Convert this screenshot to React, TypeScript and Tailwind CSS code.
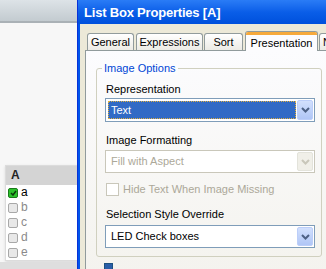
import React from 'react';

const Chevron = ({ color = '#4d6185' }: { color?: string }) => (
  <svg width="9" height="6" viewBox="0 0 9 6">
    <path d="M1 1 L4.5 4.5 L8 1" stroke={color} strokeWidth="2" fill="none" />
  </svg>
);

const Dropdown = ({ value, selected, disabled, tall }: { value: string; selected?: boolean; disabled?: boolean; tall?: boolean }) => (
  <div
    className={`flex w-[210px] items-stretch border p-[1px] ${tall ? 'h-[24px]' : 'h-[23px]'} ${
      disabled ? 'border-[#c9c7ba] bg-white' : 'border-[#7f9db9] bg-white'
    }`}
  >
    <div className="flex flex-1 items-center p-[1px]">
      {selected ? (
        <div className="flex h-full w-full items-center border border-dotted border-[#e0b040] bg-[#316ac5] pl-[2px] text-white">
          {value}
        </div>
      ) : (
        <div className={`pl-[3px] ${disabled ? 'text-[#aca899]' : 'text-black'}`}>{value}</div>
      )}
    </div>
    <div
      className={`flex w-[16px] items-center justify-center rounded-[2px] border ${
        disabled
          ? 'border-[#e3e3db] bg-[#f0efe8]'
          : 'border-[#bccef9] bg-gradient-to-b from-[#d2e0fd] to-[#b0c6f6]'
      }`}
    >
      <Chevron color={disabled ? '#c9c7ba' : '#4d6185'} />
    </div>
  </div>
);

const LedBox = ({ checked }: { checked?: boolean }) =>
  checked ? (
    <div className="flex h-[10px] w-[10px] items-center justify-center rounded-[2px] border border-[#1a7a1a] bg-[#2cc22c]">
      <svg width="7" height="6" viewBox="0 0 7 6">
        <path d="M1 3 L3 5 L6 1" stroke="#0a3a0a" strokeWidth="1.5" fill="none" />
      </svg>
    </div>
  ) : (
    <div className="h-[10px] w-[10px] rounded-[2px] border border-[#a8a8a8] bg-[#e8e8e8]" />
  );

const TABS = [
  { label: 'General', cls: 'w-[47px] mr-[2px]' },
  { label: 'Expressions', cls: 'w-[67px] mr-[1px]' },
  { label: 'Sort', cls: 'w-[39px] mr-[2px]' },
];
const ITEMS = ['a', 'b', 'c', 'd', 'e'];

export default function App() {
  return (
    <div className="flex h-[269px] w-[326px] overflow-hidden font-['Liberation_Sans',Arial,sans-serif] text-[11px] leading-[13px]">
      {/* Sheet behind */}
      <div className="flex w-[77px] shrink-0 flex-col bg-[#f7f7f7]">
        <div className="h-[23px] shrink-0 border-b-2 border-[#aab1b6] bg-gradient-to-b from-[#dde3e7] to-[#c3cbd0]" />
        <div className="flex-1 pl-[5px] pt-[142px]">
          <div className="w-[80px] border border-[#dcdcdc] bg-white shadow-sm">
            <div className="flex h-[19px] items-center bg-[#d4d4d4] pl-[5px] text-[12px] font-bold text-[#222]">A</div>
            {ITEMS.map((it, i) => (
              <div key={it} className="flex h-[15px] items-center gap-[3px] pl-[2px]">
                <LedBox checked={i === 0} />
                <span className={`text-[12px] ${i === 0 ? 'text-black' : 'text-[#8a8a8a]'}`}>{it}</span>
              </div>
            ))}
          </div>
        </div>
        <div className="h-[7px] shrink-0 bg-[#dedede]" />
      </div>

      {/* Dialog */}
      <div className="flex flex-1 flex-col border-l border-[#0831d9] bg-[#0055ea]">
        <div className="flex h-[24px] shrink-0 items-center bg-gradient-to-b from-[#2a7cf6] via-[#0a5ee8] to-[#0050dc] pl-[6px] text-[13px] font-bold tracking-[-0.2px] text-white">
          List Box Properties [A]
        </div>
        <div className="ml-[2px] flex flex-1 flex-col bg-[#ece9d8] pl-[5px] pt-[7px]">
          <div className="flex h-[19px] items-end pl-[2px]">
            {TABS.map((t) => (
              <div
                key={t.label}
                className={`flex h-[17px] shrink-0 items-center justify-center rounded-t-[3px] border border-b-0 border-[#919b9c] bg-gradient-to-b from-white to-[#ecebe5] ${t.cls}`}
              >
                {t.label}
              </div>
            ))}
            <div className="relative z-10 -mb-px flex h-[20px] w-[73px] shrink-0 flex-col rounded-t-[3px] border border-b-0 border-[#919b9c] bg-[#fcfcfe]">
              <div className="h-[3px] rounded-t-[2px] bg-[#f6a93b]" />
              <div className="flex flex-1 items-center justify-center">Presentation</div>
            </div>
            <div className="ml-[1px] flex h-[17px] w-[20px] shrink-0 items-center rounded-t-[3px] border border-b-0 border-[#919b9c] bg-gradient-to-b from-white to-[#ecebe5] pl-[3px]">
              N
            </div>
          </div>
          <div className="flex-1 border border-r-0 border-[#919b9c] bg-gradient-to-b from-[#fcfcfe] to-[#f4f3ee] pl-[10px] pt-[17px]">
            <div className="relative h-[189px] w-[226px] rounded-[3px] border border-[#d0d0bf] pl-[8px] pt-[14px]">
              <span className="absolute -top-[7px] left-[5px] bg-[#fcfcfe] px-[2px] text-[#0046d5]">Image Options</span>
              <div className="mb-[2px] pl-[1px]">Representation</div>
              <Dropdown value="Text" selected tall />
              <div className="mb-[3px] mt-[12px] pl-[1px]">Image Formatting</div>
              <Dropdown value="Fill with Aspect" disabled />
              <div className="mt-[10px] flex h-[13px] items-center gap-[4px] pl-[1px] text-[#aca899]">
                <div className="h-[13px] w-[13px] border border-[#c9c7ba] bg-white" />
                Hide Text When Image Missing
              </div>
              <div className="mb-[4px] mt-[12px] pl-[1px]">Selection Style Override</div>
              <Dropdown value="LED Check boxes" />
            </div>
            <div className="ml-[8px] mt-[6px] h-[10px] w-[9px] border border-[#1c5180] bg-[#2a5ea8]" />
          </div>
        </div>
      </div>
    </div>
  );
}
